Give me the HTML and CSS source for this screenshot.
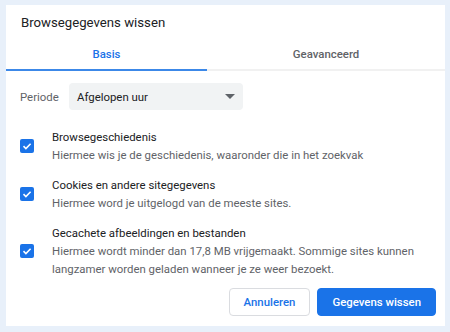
FILE: index.html
```html
<!DOCTYPE html>
<html lang="nl">
<head>
  <meta charset="UTF-8">
  <title>Browsegegevens wissen</title>
  <link rel="stylesheet" href="styles.css">
</head>
<body>
  <div class="dialog">
    <div class="title">Browsegegevens wissen</div>

    <div class="tabs">
      <div class="tab active">Basis</div>
      <div class="tab">Geavanceerd</div>
    </div>

    <div class="period">
      <span class="period-label">Periode</span>
      <div class="select">
        <span>Afgelopen uur</span>
        <span class="caret"></span>
      </div>
    </div>

    <div class="option">
      <span class="check"><svg viewBox="0 0 14 14" width="14" height="14"><path d="M3.5 7.2l2.4 2.3 4.7-4.8" fill="none" stroke="#fff" stroke-width="1.6"/></svg></span>
      <div class="option-text">
        <div class="option-title">Browsegeschiedenis</div>
        <div class="option-desc">Hiermee wis je de geschiedenis, waaronder die in het zoekvak</div>
      </div>
    </div>

    <div class="option">
      <span class="check"><svg viewBox="0 0 14 14" width="14" height="14"><path d="M3.5 7.2l2.4 2.3 4.7-4.8" fill="none" stroke="#fff" stroke-width="1.6"/></svg></span>
      <div class="option-text">
        <div class="option-title">Cookies en andere sitegegevens</div>
        <div class="option-desc">Hiermee word je uitgelogd van de meeste sites.</div>
      </div>
    </div>

    <div class="option">
      <span class="check"><svg viewBox="0 0 14 14" width="14" height="14"><path d="M3.5 7.2l2.4 2.3 4.7-4.8" fill="none" stroke="#fff" stroke-width="1.6"/></svg></span>
      <div class="option-text">
        <div class="option-title">Gecachete afbeeldingen en bestanden</div>
        <div class="option-desc">Hiermee wordt minder dan 17,8 MB vrijgemaakt. Sommige sites kunnen langzamer worden geladen wanneer je ze weer bezoekt.</div>
      </div>
    </div>

    <div class="actions">
      <button class="btn">Annuleren</button>
      <button class="btn primary">Gegevens wissen</button>
    </div>
  </div>
</body>
</html>
```

FILE: styles.css
```css
body {
  margin: 0;
  padding: 5px 5px 6px 6px;
  background-color: #e8f0fa;
  font-family: Roboto, "Liberation Sans", sans-serif;
  color: #202124;
}

.dialog {
  width: 439px;
  height: 321px;
  background-color: white;
}

.title {
  font-size: 13.2px;
  line-height: 16px;
  padding: 10px 0 0 15px;
  height: 23px;
}

.tabs {
  display: grid;
  grid-template-columns: 201px 1fr;
  border-bottom: 2px solid #f1f1f1;
}

.tab {
  text-align: center;
  font-size: 11.4px;
  font-weight: 500;
  color: #5f6368;
  height: 31px;
  line-height: 32px;
}

.tab.active {
  color: #1a73e8;
  border-bottom: 2px solid #3c88e8;
  margin-bottom: -2px;
}

.period {
  display: flex;
  align-items: center;
  padding: 12px 0 0 14px;
  font-size: 11.4px;
}

.period-label {
  color: #5f6368;
  width: 49px;
}

.select {
  width: 174px;
  height: 27px;
  box-sizing: border-box;
  background-color: #f1f3f4;
  border-radius: 4px;
  display: flex;
  align-items: center;
  justify-content: space-between;
  padding: 0 8px 0 8px;
}

.caret {
  width: 0;
  height: 0;
  border-left: 5px solid transparent;
  border-right: 5px solid transparent;
  border-top: 5px solid #5f6368;
}

.option {
  display: flex;
  align-items: center;
  padding-left: 14px;
  margin-top: 18px;
  font-size: 11.4px;
}

.option + .option {
  margin-top: 12px;
}

.check {
  width: 14px;
  height: 14px;
  background-color: #1a73e8;
  border-radius: 2px;
  flex-shrink: 0;
  margin-right: 18px;
}

.check svg {
  display: block;
}

.option-text {
  line-height: 18px;
  padding-right: 20px;
}

.option-desc {
  color: #5f6368;
}

.actions {
  display: flex;
  justify-content: flex-end;
  gap: 7px;
  padding: 10px 9px 0 0;
}

.btn {
  font-family: Roboto, "Liberation Sans", sans-serif;
  font-size: 11.4px;
  font-weight: 500;
  height: 28px;
  padding: 0 14px;
  border-radius: 4px;
  border: 1px solid #dadce0;
  background-color: white;
  color: #1a73e8;
}

.btn.primary {
  background-color: #1a73e8;
  border-color: #1a73e8;
  color: white;
}
```
